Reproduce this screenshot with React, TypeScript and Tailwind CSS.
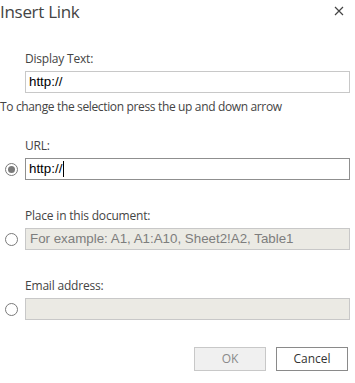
import React from "react";

function Radio({ checked }: { checked?: boolean }) {
  return (
    <div className="w-[13px] h-[13px] rounded-full border border-[#7a7a7a] bg-white flex items-center justify-center shrink-0">
      {checked && <div className="w-[7px] h-[7px] rounded-full bg-[#7a7a7a]" />}
    </div>
  );
}

export default function App() {
  return (
    <div className="w-[355px] h-[383px] bg-white font-['Open_Sans',sans-serif] text-[#444]">
      <div className="flex items-center justify-between h-[24px]">
        <div className="text-[17px] leading-[24px] text-[#444] tracking-[-0.3px]">Insert Link</div>
        <svg width="10" height="10" viewBox="0 0 10 10" className="mr-[11px] mt-[-2px]">
          <path d="M1 1 L9 9 M9 1 L1 9" stroke="#444" strokeWidth="1.2" />
        </svg>
      </div>

      <div className="pl-[25px] pr-[5px] mt-[27px]">
        <div className="text-[12px] leading-[16px] tracking-[-0.2px]">Display Text:</div>
        <div className="mt-[4px] h-[22px] border border-[#c8c8c8] bg-white flex items-center pl-[3px] font-['Liberation_Sans',sans-serif] text-[13.33px] text-black">
          http://
        </div>
      </div>

      <div className="mt-[6px] text-[12px] leading-[16px] tracking-[-0.35px]">
        To change the selection press the up and down arrow
      </div>

      <div className="mt-[23px] pl-[25px] text-[12px] leading-[16px] tracking-[-0.2px]">URL:</div>
      <div className="mt-[4px] flex items-center pl-[5px] pr-[5px]">
        <Radio checked />
        <div className="ml-[7px] flex-1 h-[22px] border border-[#8f8f8f] bg-white flex items-center pl-[3px] font-['Liberation_Sans',sans-serif] text-[13.33px] text-black">
          http://<span className="inline-block w-[1px] h-[16px] bg-black ml-[1px]" />
        </div>
      </div>

      <div className="mt-[28px] pl-[25px] text-[12px] leading-[16px] tracking-[-0.2px]">Place in this document:</div>
      <div className="mt-[4px] flex items-center pl-[5px] pr-[5px]">
        <Radio />
        <div className="ml-[7px] flex-1 h-[22px] border border-[#c8c8c8] bg-[#ebeae4] flex items-center pl-[4px] font-['Liberation_Sans',sans-serif] text-[13.33px] text-[#7d7d7d]">
          For example: A1, A1:A10, Sheet2!A2, Table1
        </div>
      </div>

      <div className="mt-[28px] pl-[25px] text-[12px] leading-[16px] tracking-[-0.2px]">Email address:</div>
      <div className="mt-[4px] flex items-center pl-[5px] pr-[5px]">
        <Radio />
        <div className="ml-[7px] flex-1 h-[22px] border border-[#c8c8c8] bg-[#ebeae4]" />
      </div>

      <div className="mt-[27px] flex justify-end gap-[10px] pr-[7px]">
        <div className="w-[72px] h-[24px] border border-[#c8c8c8] bg-[#f0f0f0] flex items-center justify-center text-[12px] text-[#8a8a8a]">
          OK
        </div>
        <div className="w-[72px] h-[24px] border border-[#8a8a8a] bg-white flex items-center justify-center text-[12px] text-[#333]">
          Cancel
        </div>
      </div>
    </div>
  );
}
